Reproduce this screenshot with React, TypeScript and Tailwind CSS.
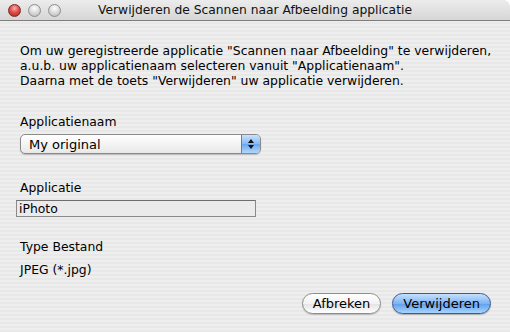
import React from 'react';

function Light({ color }: { color: 'red' | 'gray' }) {
  const cls =
    color === 'red'
      ? 'bg-[radial-gradient(circle_at_50%_30%,#f7b0a8_0%,#e0504a_45%,#a8201c_100%)] border-[#7a2a26]'
      : 'bg-[radial-gradient(circle_at_50%_30%,#ffffff_0%,#dadada_50%,#b4b4b4_100%)] border-[#8e8e8e]';
  return <div className={`w-[13px] h-[13px] rounded-full border ${cls}`} />;
}

function Button({ label, primary }: { label: string; primary?: boolean }) {
  return (
    <div
      className={
        primary
          ? 'h-[21px] px-[10px] rounded-full border border-[#3b5a94] bg-[linear-gradient(to_bottom,#c4e0ff_0%,#7fb4f2_50%,#5f9ee9_51%,#a8d4ff_100%)] flex items-center text-[13px] text-black shadow-[0_1px_1px_rgba(0,0,0,0.25)]'
          : 'h-[21px] px-[10px] rounded-full border border-[#8c8c8c] bg-[linear-gradient(to_bottom,#ffffff_0%,#f2f2f2_50%,#e2e2e2_51%,#ffffff_100%)] flex items-center text-[13px] text-black shadow-[0_1px_1px_rgba(0,0,0,0.2)]'
      }
    >
      {label}
    </div>
  );
}

export default function App() {
  return (
    <div className="w-[510px] h-[332px] overflow-hidden rounded-tr-[7px] font-['Lucida_Grande','DejaVu_Sans',sans-serif] text-black bg-[repeating-linear-gradient(to_bottom,#eeeeee_0px,#eeeeee_2px,#e8e8e8_2px,#e8e8e8_4px)] flex flex-col">
      {/* title bar */}
      <div className="h-[21px] shrink-0 relative flex items-center border-b border-[#7d7d7d] bg-[linear-gradient(to_bottom,#ececec_0%,#d6d6d6_100%)]">
        <div className="flex items-center gap-[7px] pl-[8px]">
          <Light color="red" />
          <Light color="gray" />
          <Light color="gray" />
        </div>
        <div className="absolute inset-0 flex items-center justify-center text-[12.3px] text-[#111]">
          Verwijderen de Scannen naar Afbeelding applicatie
        </div>
      </div>

      <div className="flex flex-col px-[20px] pt-[22px] text-[12.4px] leading-[15px] whitespace-nowrap">
        <p>
          Om uw geregistreerde applicatie "Scannen naar Afbeelding" te verwijderen,
          <br />
          a.u.b. uw applicatienaam selecteren vanuit "Applicatienaam".
          <br />
          Daarna met de toets "Verwijderen" uw applicatie verwijderen.
        </p>

        <div className="mt-[26px]">Applicatienaam</div>
        <div className="mt-[5px] w-[241px] h-[20px] flex items-stretch rounded-[5px] border border-[#8a8a8a] bg-[linear-gradient(to_bottom,#ffffff_0%,#f4f4f4_50%,#e8e8e8_100%)] shadow-[0_1px_1px_rgba(0,0,0,0.2)] overflow-hidden">
          <div className="flex-1 flex items-center pl-[8px] text-[13px]">My original</div>
          <div className="w-[19px] border-l border-[#5d7fb3] bg-[linear-gradient(to_bottom,#c8e2ff_0%,#86b9f2_50%,#6aa6ec_51%,#b0d8ff_100%)] flex flex-col items-center justify-center gap-[2px]">
            <svg width="6" height="4" viewBox="0 0 6 4"><path d="M3 0L6 4H0z" fill="#111" /></svg>
            <svg width="6" height="4" viewBox="0 0 6 4"><path d="M0 0h6L3 4z" fill="#111" /></svg>
          </div>
        </div>

        <div className="mt-[26px]">Applicatie</div>
        <div className="mt-[5px] -ml-[4px] w-[240px] h-[17px] border border-[#8a8a8a] border-t-[#6e6e6e] bg-[#ebebeb] flex items-center pl-[2px] text-[12.4px]">
          iPhoto
        </div>

        <div className="mt-[22px]">Type Bestand</div>
        <div className="mt-[8px]">JPEG (*.jpg)</div>
      </div>

      <div className="flex justify-end gap-[11px] pr-[19px] mt-[16px]">
        <Button label="Afbreken" />
        <Button label="Verwijderen" primary />
      </div>
    </div>
  );
}
